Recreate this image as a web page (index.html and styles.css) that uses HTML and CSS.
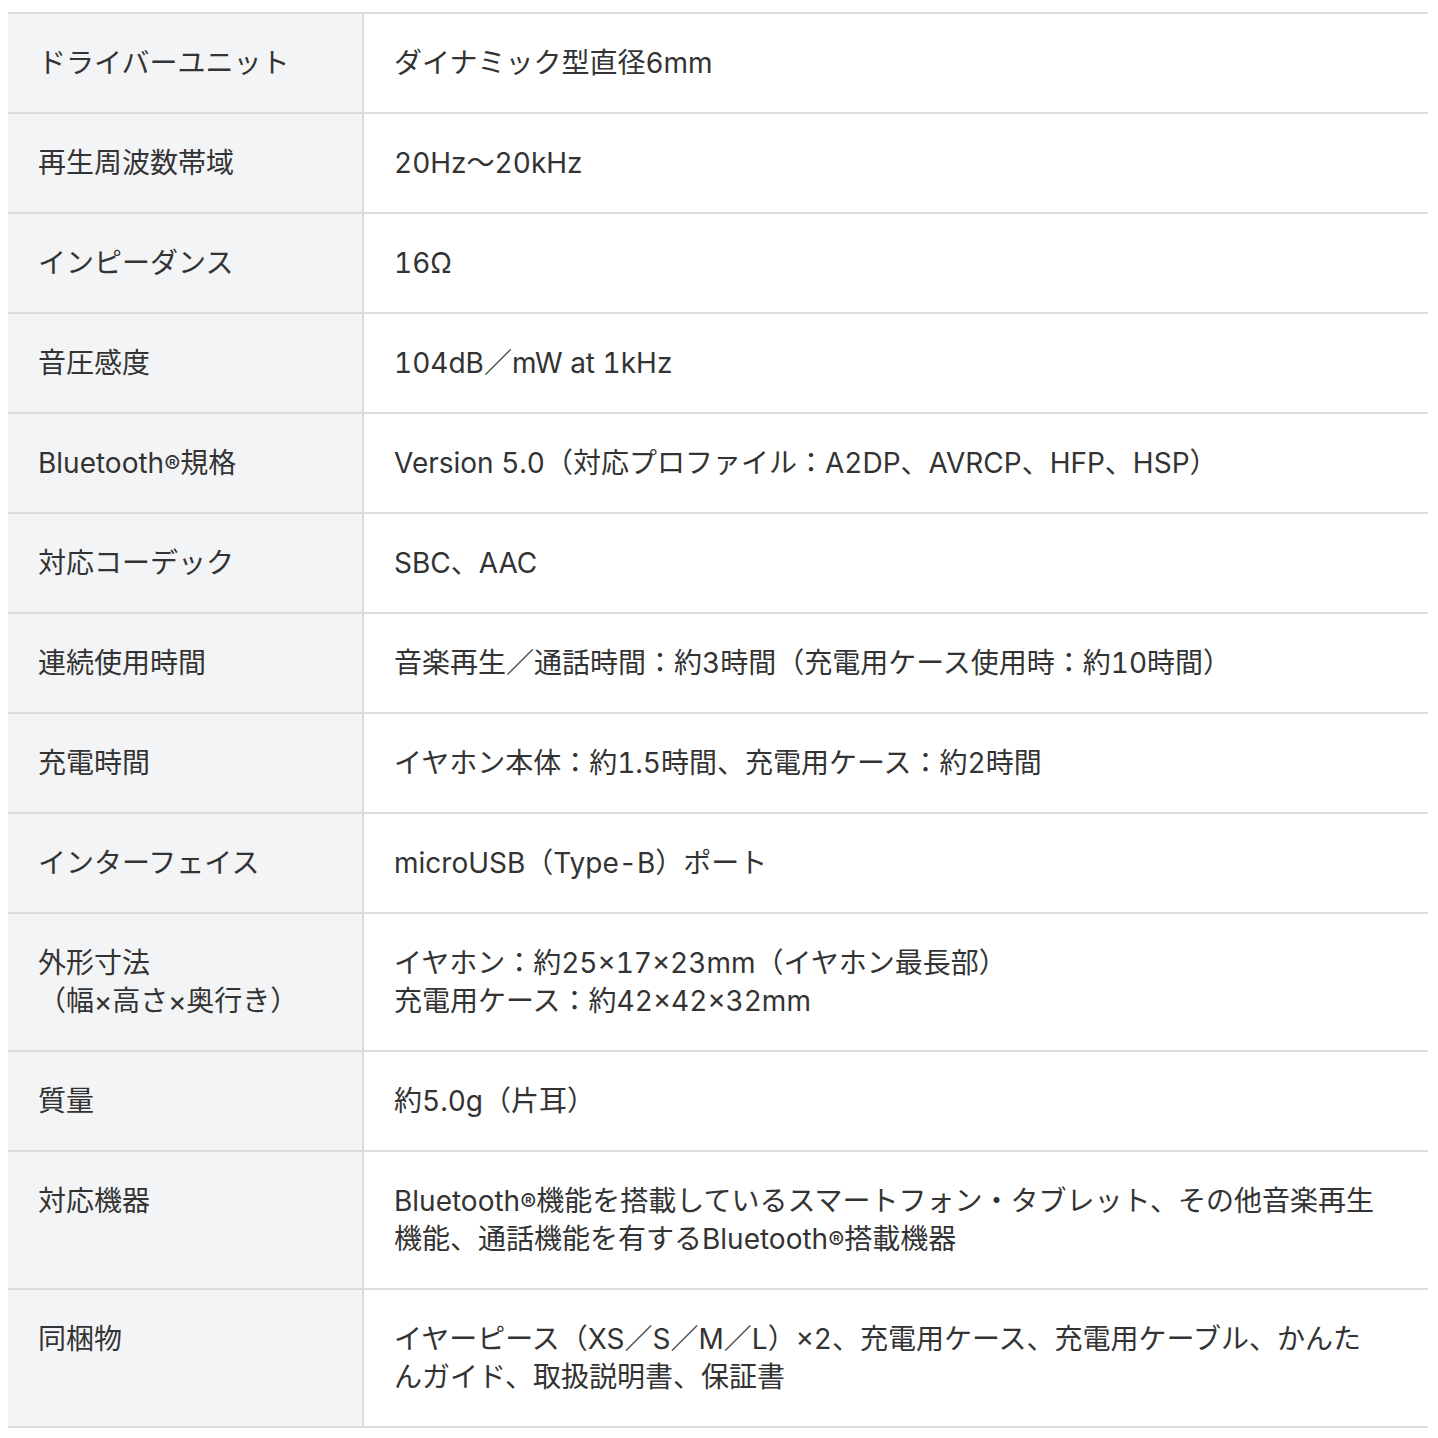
FILE: index.html
```html
<!DOCTYPE html>
<html lang="ja">
<head>
    <meta charset="UTF-8">
    <meta name="viewport" content="width=device-width, initial-scale=1.0">
    <title>仕様</title>
    <link rel="stylesheet" href="styles.css">
</head>
<body>
    <!-- 製品仕様の表 -->
    <div class="spec-wrap">
        <table class="spec-table">
            <tr>
                <th>ドライバーユニット</th>
                <td>ダイナミック型直径6mm</td>
            </tr>
            <tr>
                <th>再生周波数帯域</th>
                <td>20Hz～20kHz</td>
            </tr>
            <tr>
                <th>インピーダンス</th>
                <td>16Ω</td>
            </tr>
            <tr>
                <th>音圧感度</th>
                <td>104dB／mW at 1kHz</td>
            </tr>
            <tr>
                <th>Bluetooth<span class="reg">®</span>規格</th>
                <td>Version 5.0（対応プロファイル：A2DP、AVRCP、HFP、HSP）</td>
            </tr>
            <tr>
                <th>対応コーデック</th>
                <td>SBC、AAC</td>
            </tr>
            <tr>
                <th>連続使用時間</th>
                <td>音楽再生／通話時間：約3時間（充電用ケース使用時：約10時間）</td>
            </tr>
            <tr>
                <th>充電時間</th>
                <td>イヤホン本体：約1.5時間、充電用ケース：約2時間</td>
            </tr>
            <tr>
                <th>インターフェイス</th>
                <td>microUSB（Type-B）ポート</td>
            </tr>
            <tr>
                <th>外形寸法<br>（幅×高さ×奥行き）</th>
                <td>イヤホン：約25×17×23mm（イヤホン最長部）<br>充電用ケース：約42×42×32mm</td>
            </tr>
            <tr>
                <th>質量</th>
                <td>約5.0g（片耳）</td>
            </tr>
            <tr>
                <th>対応機器</th>
                <td>Bluetooth<span class="reg">®</span>機能を搭載しているスマートフォン・タブレット、その他音楽再生機能、通話機能を有するBluetooth<span class="reg">®</span>搭載機器</td>
            </tr>
            <tr>
                <th>同梱物</th>
                <td>イヤーピース（XS／S／M／L）×2、充電用ケース、充電用ケーブル、かんたんガイド、取扱説明書、保証書</td>
            </tr>
        </table>
    </div>
</body>
</html>
```

FILE: styles.css
```css
body {
    margin: 0;
    background-color: #fff;
    font-family: Inter, "Noto Sans CJK JP", sans-serif;
    color: #333;
}

/* 表の外側の余白 */
.spec-wrap {
    padding: 12px 10px 0 8px;
}

.spec-table {
    width: 100%;
    border-collapse: collapse;
    font-size: 28px;
    line-height: 38px;
    font-feature-settings: "tnum";
}

.spec-table th,
.spec-table td {
    border-top: 2px solid #dcdcdc;
    border-bottom: 2px solid #dcdcdc;
    padding: 30px;
    text-align: left;
    vertical-align: top;
    font-weight: normal;
}

/* 左の項目名の列 */
.spec-table th {
    width: 25%;
    box-sizing: border-box;
    background-color: #f3f4f6;
    border-right: 2px solid #dcdcdc;
}

.spec-table td {
    padding-right: 40px;
}

/* 登録商標マークは小さめ */
.reg {
    font-size: 24px;
    line-height: 1;
}
```
